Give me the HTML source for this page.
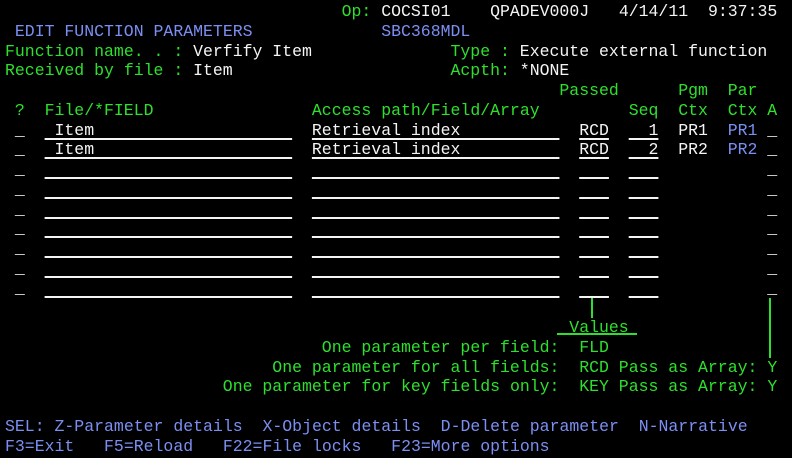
<!DOCTYPE html>
<html><head><meta charset="utf-8"><style>
html,body{margin:0;padding:0;background:#000;}
body{width:792px;height:458px;position:relative;overflow:hidden;font-family:"Liberation Mono",monospace;font-size:16.5px;}
.s{position:absolute;white-space:pre;line-height:20px;left:calc(5px + var(--c)*9.9px);top:calc(2px + var(--r)*19.75px);}
.g{color:#2ee02e}.w{color:#f4f4f4}.b{color:#7b8ff2}
.u{text-decoration:underline;text-decoration-thickness:2px;text-underline-offset:3px;text-decoration-color:#f4f4f4;}
.ln{position:absolute;background:#2ee02e;}
</style></head><body>
<span class="s g" style="--c:34;--r:0">Op:</span><span class="s w" style="--c:38;--r:0">COCSI01    QPADEV000J   4/14/11  9:37:35</span>
<span class="s b" style="--c:1;--r:1">EDIT FUNCTION PARAMETERS</span><span class="s b" style="--c:38;--r:1">SBC368MDL</span>
<span class="s g" style="--c:0;--r:2">Function name. . :</span><span class="s w" style="--c:19;--r:2">Verfify Item</span>
<span class="s g" style="--c:45;--r:2">Type :</span><span class="s w" style="--c:52;--r:2">Execute external function</span>
<span class="s g" style="--c:0;--r:3">Received by file :</span><span class="s w" style="--c:19;--r:3">Item</span>
<span class="s g" style="--c:45;--r:3">Acpth:</span><span class="s w" style="--c:52;--r:3">*NONE</span>
<span class="s g" style="--c:56;--r:4">Passed</span><span class="s g" style="--c:68;--r:4">Pgm</span><span class="s g" style="--c:73;--r:4">Par</span>
<span class="s g" style="--c:1;--r:5">?</span><span class="s g" style="--c:4;--r:5">File/*FIELD</span><span class="s g" style="--c:31;--r:5">Access path/Field/Array</span><span class="s g" style="--c:63;--r:5">Seq</span><span class="s g" style="--c:68;--r:5">Ctx</span><span class="s g" style="--c:73;--r:5">Ctx</span><span class="s g" style="--c:77;--r:5">A</span>

<span class="s w" style="--c:1;--r:6">_</span><span class="s w u" style="--c:4;--r:6"> Item                    </span><span class="s w u" style="--c:31;--r:6">Retrieval index          </span><span class="s w u" style="--c:58;--r:6">RCD</span><span class="s w u" style="--c:63;--r:6">  1</span><span class="s w" style="--c:68;--r:6">PR1</span><span class="s b" style="--c:73;--r:6">PR1</span><span class="s w" style="--c:77;--r:6">_</span>
<span class="s w" style="--c:1;--r:7">_</span><span class="s w u" style="--c:4;--r:7"> Item                    </span><span class="s w u" style="--c:31;--r:7">Retrieval index          </span><span class="s w u" style="--c:58;--r:7">RCD</span><span class="s w u" style="--c:63;--r:7">  2</span><span class="s w" style="--c:68;--r:7">PR2</span><span class="s b" style="--c:73;--r:7">PR2</span><span class="s w" style="--c:77;--r:7">_</span>

<span class="s w" style="--c:1;--r:8">_</span><span class="s w u" style="--c:4;--r:8">                         </span><span class="s w u" style="--c:31;--r:8">                         </span><span class="s w u" style="--c:58;--r:8">   </span><span class="s w u" style="--c:63;--r:8">   </span><span class="s w" style="--c:77;--r:8">_</span>
<span class="s w" style="--c:1;--r:9">_</span><span class="s w u" style="--c:4;--r:9">                         </span><span class="s w u" style="--c:31;--r:9">                         </span><span class="s w u" style="--c:58;--r:9">   </span><span class="s w u" style="--c:63;--r:9">   </span><span class="s w" style="--c:77;--r:9">_</span>
<span class="s w" style="--c:1;--r:10">_</span><span class="s w u" style="--c:4;--r:10">                         </span><span class="s w u" style="--c:31;--r:10">                         </span><span class="s w u" style="--c:58;--r:10">   </span><span class="s w u" style="--c:63;--r:10">   </span><span class="s w" style="--c:77;--r:10">_</span>
<span class="s w" style="--c:1;--r:11">_</span><span class="s w u" style="--c:4;--r:11">                         </span><span class="s w u" style="--c:31;--r:11">                         </span><span class="s w u" style="--c:58;--r:11">   </span><span class="s w u" style="--c:63;--r:11">   </span><span class="s w" style="--c:77;--r:11">_</span>
<span class="s w" style="--c:1;--r:12">_</span><span class="s w u" style="--c:4;--r:12">                         </span><span class="s w u" style="--c:31;--r:12">                         </span><span class="s w u" style="--c:58;--r:12">   </span><span class="s w u" style="--c:63;--r:12">   </span><span class="s w" style="--c:77;--r:12">_</span>
<span class="s w" style="--c:1;--r:13">_</span><span class="s w u" style="--c:4;--r:13">                         </span><span class="s w u" style="--c:31;--r:13">                         </span><span class="s w u" style="--c:58;--r:13">   </span><span class="s w u" style="--c:63;--r:13">   </span><span class="s w" style="--c:77;--r:13">_</span>
<span class="s w" style="--c:1;--r:14">_</span><span class="s w u" style="--c:4;--r:14">                         </span><span class="s w u" style="--c:31;--r:14">                         </span><span class="s w u" style="--c:58;--r:14">   </span><span class="s w u" style="--c:63;--r:14">   </span><span class="s w" style="--c:77;--r:14">_</span>

<div class="ln" style="left:591px;top:298px;width:2px;height:20px"></div>
<div class="ln" style="left:769px;top:298px;width:2px;height:60px"></div>
<span class="s g" style="--c:57;--r:16">Values</span>
<div class="ln" style="left:557px;top:333px;width:80px;height:2px"></div>
<span class="s g" style="--c:32;--r:17">One parameter per field:</span><span class="s g" style="--c:58;--r:17">FLD</span>
<span class="s g" style="--c:27;--r:18">One parameter for all fields:</span><span class="s g" style="--c:58;--r:18">RCD Pass as Array: Y</span>
<span class="s g" style="--c:22;--r:19">One parameter for key fields only:</span><span class="s g" style="--c:58;--r:19">KEY Pass as Array: Y</span>
<span class="s b" style="--c:0;--r:21">SEL: Z-Parameter details  X-Object details  D-Delete parameter  N-Narrative</span>
<span class="s b" style="--c:0;--r:22">F3=Exit   F5=Reload   F22=File locks   F23=More options</span>
</body></html>
